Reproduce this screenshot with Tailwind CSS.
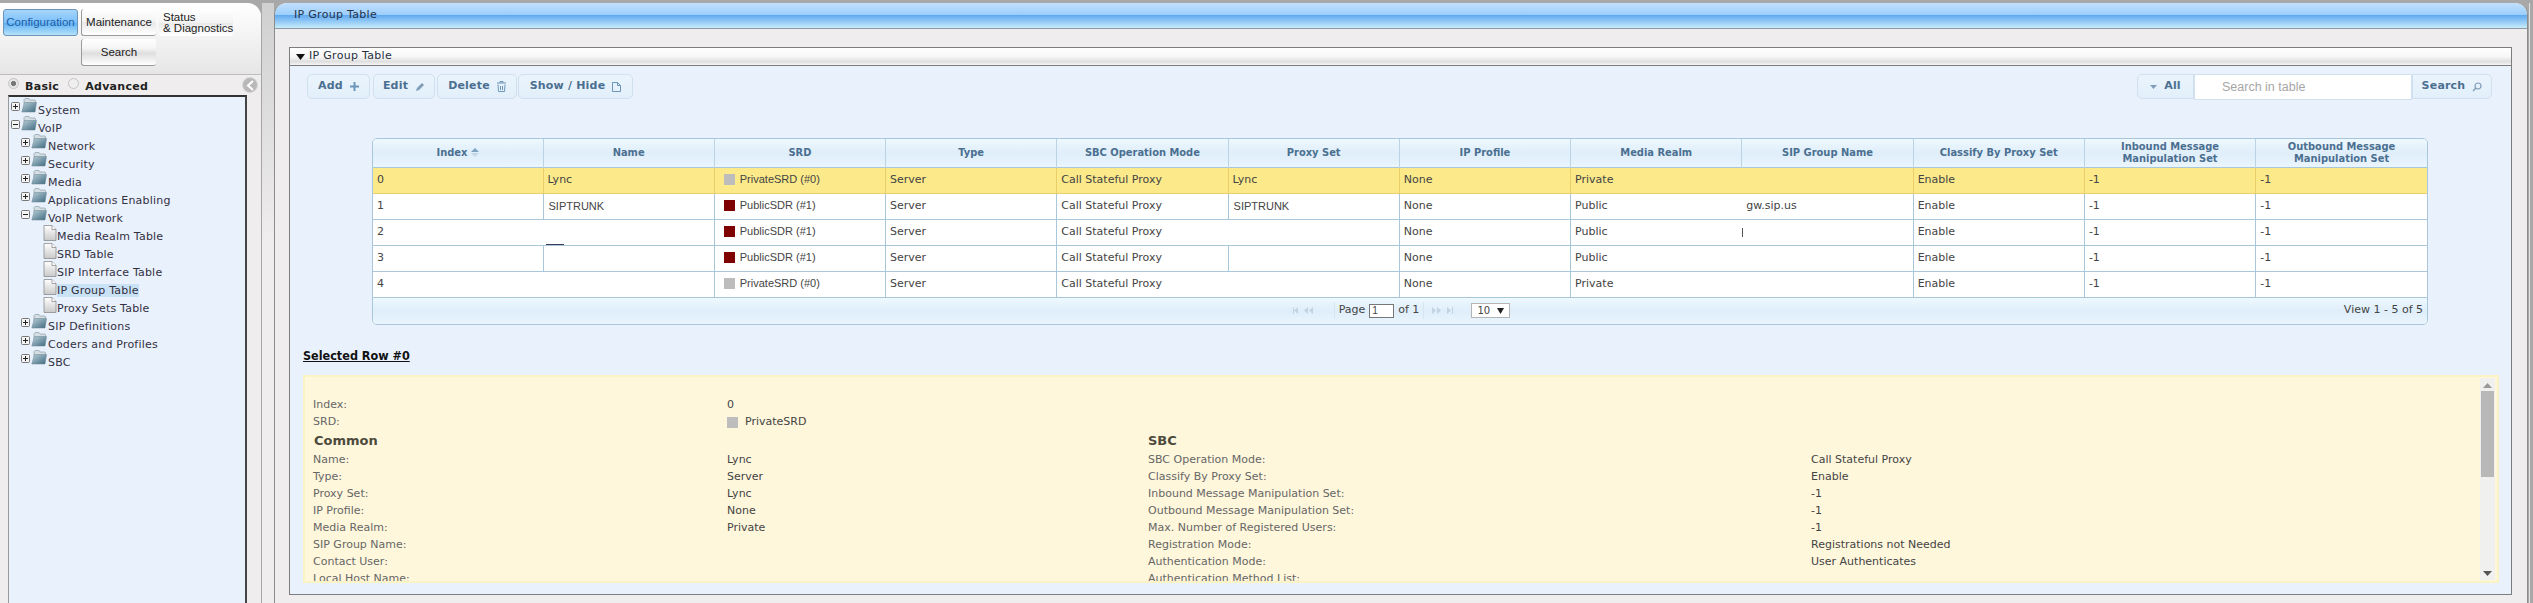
<!DOCTYPE html>
<html lang="en">

<head>
    <meta charset="UTF-8">
    <title>IP Group Table</title>
    <script src="https://cdn.jsdelivr.net/npm/@tailwindcss/browser@4"></script>
</head>

<body class="w-[2533px] h-[603px] overflow-hidden bg-[#a8a8a8] pt-[3px] flex font-['DejaVu_Sans',sans-serif] text-[11px] text-[#333]">

    <!-- shared icons -->
    <svg class="absolute w-0 h-0">
        <defs>
            <linearGradient id="fg" x1="0" y1="0" x2="1" y2="1">
                <stop offset="0" stop-color="#b9cfd8" />
                <stop offset="1" stop-color="#3f6a80" />
            </linearGradient>
            <linearGradient id="dg" x1="0" y1="0" x2="0" y2="1">
                <stop offset="0" stop-color="#ffffff" />
                <stop offset="1" stop-color="#c9c9c9" />
            </linearGradient>
        </defs>
        <symbol id="folder" viewBox="0 0 16 15">
            <path d="M3 3V1.500L4 .5h4l1 1.500h5l.5 1V7H3z" fill="#d4dde2" stroke="#7f959f" stroke-width=".6" />
            <path d="M3.500 4.500h12L14 14H.8z" fill="url(#fg)" stroke="#6b8793" stroke-width=".5" />
        </symbol>
        <symbol id="doc" viewBox="0 0 14 16">
            <path d="M1 .5h8l4 4v11H1z" fill="url(#dg)" stroke="#8d8d8d" stroke-width=".8" />
            <path d="M9 .5v4h4" fill="#fff" stroke="#8d8d8d" stroke-width=".8" />
        </symbol>
        <symbol id="plus" viewBox="0 0 9 9">
            <rect x=".5" y=".5" width="8" height="8" rx="1" fill="#f4f4f4" stroke="#777" />
            <path d="M2 4.500h5M4.500 2v5" stroke="#222" />
        </symbol>
        <symbol id="minus" viewBox="0 0 9 9">
            <rect x=".5" y=".5" width="8" height="8" rx="1" fill="#f4f4f4" stroke="#777" />
            <path d="M2 4.500h5" stroke="#222" />
        </symbol>
    </svg>

    <!-- left menu -->
    <aside class="w-[262px] shrink-0 flex flex-col bg-[#efeded] border-r border-[#a5a5a5] rounded-tr-[14px]">
        <nav class="h-[72px] shrink-0 pt-[6px] pl-[3px] border-b border-[#bdbdbd] rounded-tr-[14px] bg-gradient-to-b from-white to-[#e6e6e6] font-['Liberation_Sans',sans-serif] text-[11.500px] leading-[11px] text-[#222]">
            <div class="grid grid-cols-[75px_75px_74px] auto-rows-[27px] gap-x-[3px] gap-y-[3px]">
                <a class="flex items-center justify-center rounded-[3px] border border-[#6d95b8] text-[#1d5fa5] bg-[linear-gradient(#a6d5fb,#7cc0fb_50%,#5eb0f5_52%,#b6e3fb)]">Configuration</a>
                <a class="flex items-center justify-center rounded-[3px] border-l border-b border-[#9a9a9a] bg-[linear-gradient(#fff,#f3f3f3_50%,#e9e9e9_52%,#fff)]">Maintenance</a>
                <a class="flex flex-col justify-center pl-[4px] whitespace-nowrap rounded-[3px] bg-[linear-gradient(#fff,#f3f3f3_50%,#e9e9e9_52%,#fff)]"><span>Status</span><span>&amp; Diagnostics</span></a>
                <a class="col-start-2 flex items-center justify-center rounded-[3px] border-l border-b border-[#9a9a9a] bg-[linear-gradient(#fff,#f5f5f5_35%,#dedede_55%,#fff)]">Search</a>
            </div>
        </nav>

        <div class="h-[20px] shrink-0 flex items-center pl-[8px] pr-[3px] font-bold text-[#222]">
            <span class="w-[11px] h-[11px] rounded-full border border-[#c4c4c4] bg-[radial-gradient(#777_35%,#e6e6e6_45%)] -translate-y-[2px]"></span>
            <span class="ml-[6px] tracking-[.3px] translate-y-[2px]">Basic</span>
            <span class="ml-[9px] w-[11px] h-[11px] rounded-full border border-[#c4c4c4] bg-[#efefef] -translate-y-[2px]"></span>
            <span class="ml-[6px] tracking-[.3px] translate-y-[2px]">Advanced</span>
            <span class="ml-auto w-[16px] h-[16px] rounded-full bg-[#b9b9b9] border border-[#d8d8d8] flex items-center justify-center">
                <svg width="9" height="11" viewBox="0 0 9 11"><path d="M7 1 2 5.500 7 10" fill="none" stroke="#fff" stroke-width="2" /></svg>
            </span>
        </div>

        <div class="ml-[8px] w-[239px] flex-1 bg-[#e9f1fd] border-t-2 border-t-[#333] border-r-2 border-r-[#444] border-l border-l-[#999] pt-[1px] pl-[2px] text-[#33303f] tracking-[.2px]">
            <div class="flex h-[18px]"><svg class="w-[9px] h-[9px] mt-[4px]"><use href="#plus" /></svg><svg class="w-[16px] h-[15px] ml-[1px]"><use href="#folder" /></svg><span class="ml-[1px] leading-[26px]">System</span></div>
            <div class="flex h-[18px]"><svg class="w-[9px] h-[9px] mt-[4px]"><use href="#minus" /></svg><svg class="w-[16px] h-[15px] ml-[1px]"><use href="#folder" /></svg><span class="ml-[1px] leading-[26px]">VoIP</span></div>
            <div class="flex h-[18px] pl-[10px]"><svg class="w-[9px] h-[9px] mt-[4px]"><use href="#plus" /></svg><svg class="w-[16px] h-[15px] ml-[1px]"><use href="#folder" /></svg><span class="ml-[1px] leading-[26px]">Network</span></div>
            <div class="flex h-[18px] pl-[10px]"><svg class="w-[9px] h-[9px] mt-[4px]"><use href="#plus" /></svg><svg class="w-[16px] h-[15px] ml-[1px]"><use href="#folder" /></svg><span class="ml-[1px] leading-[26px]">Security</span></div>
            <div class="flex h-[18px] pl-[10px]"><svg class="w-[9px] h-[9px] mt-[4px]"><use href="#plus" /></svg><svg class="w-[16px] h-[15px] ml-[1px]"><use href="#folder" /></svg><span class="ml-[1px] leading-[26px]">Media</span></div>
            <div class="flex h-[18px] pl-[10px]"><svg class="w-[9px] h-[9px] mt-[4px]"><use href="#plus" /></svg><svg class="w-[16px] h-[15px] ml-[1px]"><use href="#folder" /></svg><span class="ml-[1px] leading-[26px]">Applications Enabling</span></div>
            <div class="flex h-[18px] pl-[10px]"><svg class="w-[9px] h-[9px] mt-[4px]"><use href="#minus" /></svg><svg class="w-[16px] h-[15px] ml-[1px]"><use href="#folder" /></svg><span class="ml-[1px] leading-[26px]">VoIP Network</span></div>
            <div class="flex h-[18px] pl-[32px]"><svg class="w-[14px] h-[16px] mt-[1px]"><use href="#doc" /></svg><span class="leading-[26px]">Media Realm Table</span></div>
            <div class="flex h-[18px] pl-[32px]"><svg class="w-[14px] h-[16px] mt-[1px]"><use href="#doc" /></svg><span class="leading-[26px]">SRD Table</span></div>
            <div class="flex h-[18px] pl-[32px]"><svg class="w-[14px] h-[16px] mt-[1px]"><use href="#doc" /></svg><span class="leading-[26px]">SIP Interface Table</span></div>
            <div class="flex h-[18px] pl-[32px]"><svg class="w-[14px] h-[16px] mt-[1px]"><use href="#doc" /></svg><span class="h-[13px] mt-[6px] leading-[13px] bg-[#c9e2f6]">IP Group Table</span></div>
            <div class="flex h-[18px] pl-[32px]"><svg class="w-[14px] h-[16px] mt-[1px]"><use href="#doc" /></svg><span class="leading-[26px]">Proxy Sets Table</span></div>
            <div class="flex h-[18px] pl-[10px]"><svg class="w-[9px] h-[9px] mt-[4px]"><use href="#plus" /></svg><svg class="w-[16px] h-[15px] ml-[1px]"><use href="#folder" /></svg><span class="ml-[1px] leading-[26px]">SIP Definitions</span></div>
            <div class="flex h-[18px] pl-[10px]"><svg class="w-[9px] h-[9px] mt-[4px]"><use href="#plus" /></svg><svg class="w-[16px] h-[15px] ml-[1px]"><use href="#folder" /></svg><span class="ml-[1px] leading-[26px]">Coders and Profiles</span></div>
            <div class="flex h-[18px] pl-[10px]"><svg class="w-[9px] h-[9px] mt-[4px]"><use href="#plus" /></svg><svg class="w-[16px] h-[15px] ml-[1px]"><use href="#folder" /></svg><span class="ml-[1px] leading-[26px]">SBC</span></div>
        </div>
    </aside>

    <!-- gutter -->
    <div class="w-[12px] shrink-0 bg-[linear-gradient(#d0d0d0,#efeded_40%)]"></div>

    <!-- main panel -->
    <main class="w-[2254px] shrink-0 flex flex-col bg-[#efeded] border-x border-[#8c8c8c] rounded-t-[12px]">
        <header class="h-[26px] shrink-0 pl-[19px] flex items-center rounded-t-[12px] border-b border-[#8a9aa5] bg-[linear-gradient(#c2e0fc,#9bcefc_48%,#62aaf0_50%,#a9d8f8_85%,#c9edfb)] tracking-[.3px] text-[#26334a]">IP Group Table</header>

        <section class="mt-[18px] ml-[14px] w-[2223px] h-[548px] flex flex-col border border-[#7d7d7d] bg-[#e9f1fd]">
            <div class="h-[18px] shrink-0 flex items-center pl-[6px] border-b border-[#7d7d7d] bg-[linear-gradient(#fff,#f7f7f7_50%,#dfdfdf_80%,#f5f5f5)] tracking-[.3px] text-[#26303f]">
                <svg class="mr-[4px]" width="9" height="6" viewBox="0 0 9 6"><path d="M0 0h9L4.500 6z" fill="#111" /></svg>
                IP Group Table
            </div>

            <!-- toolbar -->
            <div class="mt-[8px] h-[26px] shrink-0 pl-[17px] pr-[19px] flex items-start font-bold text-[#4b6f90] tracking-[.2px]">
                <a class="w-[63px] h-[25px] flex items-center justify-center gap-[7px] rounded-[5px] border border-[#d0e0ee] bg-[linear-gradient(#eaf4fc,#e2effa)]">Add
                    <svg width="9" height="9" viewBox="0 0 9 9"><path d="M4.500 0v9M0 4.500h9" stroke="#6d97ba" stroke-width="2" /></svg></a>
                <a class="ml-[3px] w-[62px] h-[25px] flex items-center justify-center gap-[7px] rounded-[5px] border border-[#d0e0ee] bg-[linear-gradient(#eaf4fc,#e2effa)]">Edit
                    <svg width="10" height="10" viewBox="0 0 10 10"><path d="M1 9l1-3 5-5 2 2-5 5z" fill="#7d9cb8" /></svg></a>
                <a class="ml-[2px] w-[80px] h-[25px] flex items-center justify-center gap-[7px] rounded-[5px] border border-[#d0e0ee] bg-[linear-gradient(#eaf4fc,#e2effa)]">Delete
                    <svg width="9" height="11" viewBox="0 0 9 11"><path d="M0 2h9M3 2V.5h3V2M1 3.500 1.500 10.500h6L8 3.500M3.500 5v4M5.500 5v4" fill="none" stroke="#6d97ba" /></svg></a>
                <a class="ml-[1px] w-[115px] h-[25px] flex items-center justify-center gap-[7px] rounded-[5px] border border-[#d0e0ee] bg-[linear-gradient(#eaf4fc,#e2effa)]">Show / Hide
                    <svg width="9" height="10" viewBox="0 0 9 10"><path d="M.5.500h5l3 3v6h-8zM5.500.500v3h3" fill="none" stroke="#6d97ba" /></svg></a>

                <div class="ml-auto flex items-start">
                    <a class="w-[57px] h-[25px] flex items-center justify-center gap-[7px] rounded-l-[5px] border border-[#d0e0ee] bg-[linear-gradient(#eaf4fc,#e2effa)]">
                        <svg width="7" height="4" viewBox="0 0 7 4"><path d="M0 0h7L3.500 4z" fill="#7f9db8" /></svg>All</a>
                    <input class="w-[218px] h-[26px] pl-[27px] bg-white border border-[#d0e0ee] font-['Liberation_Sans',sans-serif] font-normal text-[12.500px] tracking-normal placeholder:text-[#a6a6a6] outline-none" placeholder="Search in table">
                    <a class="w-[80px] h-[25px] flex items-center justify-center gap-[7px] rounded-r-[5px] border border-[#d0e0ee] bg-[linear-gradient(#eaf4fc,#e2effa)]">Search
                        <svg width="10" height="10" viewBox="0 0 10 10"><circle cx="6" cy="4" r="3" fill="none" stroke="#7f9db8" stroke-width="1.200" /><path d="M4 6 1 9" stroke="#7f9db8" stroke-width="1.500" /></svg></a>
                </div>
            </div>

            <!-- grid -->
            <div class="mt-[38px] ml-[82px] w-[2056px] shrink-0 border border-[#a9c7da] rounded-[5px] overflow-hidden">
                <table class="w-full table-fixed border-collapse text-[#444] [&_td]:h-[26px] [&_td]:pl-[4px] [&_td]:border-b [&_td]:border-l [&_td]:border-[#a9c7da] [&_td]:whitespace-nowrap [&_td:first-child]:border-l-0 [&_th]:h-[28px] [&_th]:border-l [&_th]:border-[#bcd3e4] [&_th:first-child]:border-l-0">
                    <colgroup>
                        <col class="w-[170px]">
                    </colgroup>
                    <thead class="bg-[linear-gradient(#eef8fe,#dfeefa_50%,#eaf5fd)] font-['DejaVu_Sans_Condensed','DejaVu_Sans',sans-serif] font-bold text-[#4b6f90] leading-[12px]">
                        <tr class="border-b border-[#a9c7da]">
                            <th>Index <svg class="inline align-[-1px]" width="8" height="9" viewBox="0 0 8 9"><path d="M4 0l4 4H0z" fill="#7fa4c2" /><path d="M0 5h8L4 9z" fill="#c3d8e8" /></svg></th>
                            <th>Name</th>
                            <th>SRD</th>
                            <th>Type</th>
                            <th>SBC Operation Mode</th>
                            <th>Proxy Set</th>
                            <th>IP Profile</th>
                            <th>Media Realm</th>
                            <th>SIP Group Name</th>
                            <th>Classify By Proxy Set</th>
                            <th>Inbound Message<br>Manipulation Set</th>
                            <th>Outbound Message<br>Manipulation Set</th>
                        </tr>
                    </thead>
                    <tbody class="bg-white">
                        <tr class="bg-[#fbe98a] [&_td]:border-[#e8cf6c]">
                            <td>0</td>
                            <td>Lync</td>
                            <td class="font-['Liberation_Sans',sans-serif]"><span class="inline-flex items-center gap-[5px] pl-[5px]"><i class="w-[11px] h-[11px] bg-[#bdbdbd]"></i>PrivateSRD (#0)</span></td>
                            <td>Server</td>
                            <td>Call Stateful Proxy</td>
                            <td>Lync</td>
                            <td>None</td>
                            <td>Private</td>
                            <td class="border-l-[#fbe98a]!"></td>
                            <td>Enable</td>
                            <td>-1</td>
                            <td>-1</td>
                        </tr>
                        <tr>
                            <td>1</td>
                            <td class="pl-[5px]! font-['Liberation_Sans',sans-serif]">SIPTRUNK</td>
                            <td class="font-['Liberation_Sans',sans-serif]"><span class="inline-flex items-center gap-[5px] pl-[5px]"><i class="w-[11px] h-[11px] bg-[#7f0000]"></i>PublicSDR (#1)</span></td>
                            <td>Server</td>
                            <td>Call Stateful Proxy</td>
                            <td class="pl-[5px]! font-['Liberation_Sans',sans-serif]">SIPTRUNK</td>
                            <td>None</td>
                            <td>Public</td>
                            <td class="border-l-white!">gw.sip.us</td>
                            <td>Enable</td>
                            <td>-1</td>
                            <td>-1</td>
                        </tr>
                        <tr>
                            <td>2</td>
                            <td class="relative border-l-white!"><i class="absolute left-[2px] bottom-0 w-[18px] h-[1px] bg-[#3a3a5a]"></i></td>
                            <td class="font-['Liberation_Sans',sans-serif]"><span class="inline-flex items-center gap-[5px] pl-[5px]"><i class="w-[11px] h-[11px] bg-[#7f0000]"></i>PublicSDR (#1)</span></td>
                            <td>Server</td>
                            <td>Call Stateful Proxy</td>
                            <td class="border-l-white!"></td>
                            <td>None</td>
                            <td>Public</td>
                            <td class="relative border-l-white!"><i class="absolute left-0 top-[8px] w-[1px] h-[9px] bg-[#555]"></i></td>
                            <td>Enable</td>
                            <td>-1</td>
                            <td>-1</td>
                        </tr>
                        <tr>
                            <td>3</td>
                            <td></td>
                            <td class="font-['Liberation_Sans',sans-serif]"><span class="inline-flex items-center gap-[5px] pl-[5px]"><i class="w-[11px] h-[11px] bg-[#7f0000]"></i>PublicSDR (#1)</span></td>
                            <td>Server</td>
                            <td>Call Stateful Proxy</td>
                            <td></td>
                            <td>None</td>
                            <td>Public</td>
                            <td class="border-l-white!"></td>
                            <td>Enable</td>
                            <td>-1</td>
                            <td>-1</td>
                        </tr>
                        <tr>
                            <td>4</td>
                            <td class="border-l-white!"></td>
                            <td class="font-['Liberation_Sans',sans-serif]"><span class="inline-flex items-center gap-[5px] pl-[5px]"><i class="w-[11px] h-[11px] bg-[#bdbdbd]"></i>PrivateSRD (#0)</span></td>
                            <td>Server</td>
                            <td>Call Stateful Proxy</td>
                            <td class="border-l-white!"></td>
                            <td>None</td>
                            <td>Private</td>
                            <td class="border-l-white!"></td>
                            <td>Enable</td>
                            <td>-1</td>
                            <td>-1</td>
                        </tr>
                    </tbody>
                </table>
                <div class="h-[26px] pr-[4px] grid grid-cols-[1fr_auto_1fr] items-center bg-[linear-gradient(#eef8fe,#dfeefa_50%,#eaf5fd)] text-[#444]">
                    <span></span>
                    <div class="flex items-center pl-[6px]">
                        <svg width="30" height="7" viewBox="0 0 30 7" fill="#c3d3e2"><path d="M1 0h1v7H1zM6 0v7L2 3.500zM16 0v7l-4-3.500zM21 0v7l-4-3.500z" /></svg>
                        <span class="ml-[12px] pl-[4px] border-l border-[#d6e5f1]">Page</span>
                        <input class="mx-[4px] w-[25px] h-[14px] bg-white border border-[#777] text-[10px] leading-[12px] pl-[2px] font-['Liberation_Sans',sans-serif]" value="1">
                        <span class="pr-[4px] border-r border-[#d6e5f1]">of 1</span>
                        <svg class="ml-[8px]" width="25" height="7" viewBox="0 0 25 7" fill="#c3d3e2"><path d="M0 0v7l4-3.500zM5 0v7l4-3.500zM15 0v7l4-3.500zM20 0h1v7h-1z" /></svg>
                        <span class="ml-[14px] w-[39px] h-[15px] flex items-center justify-between px-[5px] bg-white border border-[#b5b5b5] text-[10px]">10<svg width="7" height="6" viewBox="0 0 7 6"><path d="M0 0h7L3.500 6z" fill="#222" /></svg></span>
                    </div>
                    <span class="text-right">View 1 - 5 of 5</span>
                </div>
            </div>

            <h3 class="mt-[23px] ml-[13px] h-[16px] leading-[16px] text-[12.500px] font-bold underline text-[#111] font-['DejaVu_Sans_Condensed','DejaVu_Sans',sans-serif]">Selected Row #0</h3>

            <!-- selected row details -->
            <div class="mt-[11px] ml-[13px] w-[2196px] h-[208px] flex border-2 border-[#fbf3c4] bg-[#fff7dc] overflow-hidden">
                <div class="flex-1 pt-[20px] pl-[8px] grid grid-cols-[414px_421px_663px_1fr] grid-rows-[17px_17px_21px_repeat(8,17px)] content-start items-center text-[#666]">
                    <span>Index:</span><span class="col-span-3 text-[#444]">0</span>
                    <span>SRD:</span><span class="col-span-3 flex items-center gap-[7px] text-[#444]"><i class="w-[11px] h-[11px] bg-[#bdbdbd]"></i>PrivateSRD</span>
                    <b class="col-span-2 pl-[1px] text-[13px] text-[#4d4a3c]">Common</b><b class="col-span-2 text-[13px] text-[#4d4a3c]">SBC</b>
                    <span>Name:</span><span class="text-[#444]">Lync</span><span>SBC Operation Mode:</span><span class="text-[#444]">Call Stateful Proxy</span>
                    <span>Type:</span><span class="text-[#444]">Server</span><span>Classify By Proxy Set:</span><span class="text-[#444]">Enable</span>
                    <span>Proxy Set:</span><span class="text-[#444]">Lync</span><span>Inbound Message Manipulation Set:</span><span class="text-[#444]">-1</span>
                    <span>IP Profile:</span><span class="text-[#444]">None</span><span>Outbound Message Manipulation Set:</span><span class="text-[#444]">-1</span>
                    <span>Media Realm:</span><span class="text-[#444]">Private</span><span>Max. Number of Registered Users:</span><span class="text-[#444]">-1</span>
                    <span>SIP Group Name:</span><span></span><span>Registration Mode:</span><span class="text-[#444]">Registrations not Needed</span>
                    <span>Contact User:</span><span></span><span>Authentication Mode:</span><span class="text-[#444]">User Authenticates</span>
                    <span>Local Host Name:</span><span></span><span>Authentication Method List:</span><span></span>
                </div>
                <div class="w-[15px] mr-[2px] my-[1px] flex flex-col items-center bg-[#f0f0ee] pt-[5px] pb-[4px] px-[1px]">
                    <svg width="9" height="5" viewBox="0 0 9 5"><path d="M0 5h9L4.500 0z" fill="#999" /></svg>
                    <div class="mt-[3px] w-full h-[86px] bg-[#b8b8b8]"></div>
                    <svg class="mt-auto" width="9" height="5" viewBox="0 0 9 5"><path d="M0 0h9L4.500 5z" fill="#555" /></svg>
                </div>
            </div>
        </section>
    </main>

    <div class="ml-[1px] flex-1 border-l border-[#e2e2e2]"></div>
</body>

</html>
